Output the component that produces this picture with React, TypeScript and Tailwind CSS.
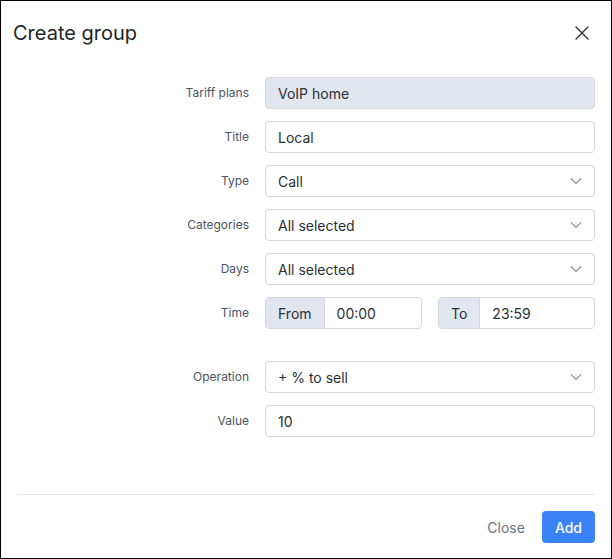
import { ChevronDown, X } from 'lucide-react';

const labelCls = 'w-[264px] pr-4 text-right text-[12px] text-[#4b5563]';
const inputCls = 'flex h-8 w-[330px] items-center rounded border border-[#d5d9de] px-3 text-[14px] text-[#2b3035]';

function Row({ label, children, className = '' }: { label: string; children: React.ReactNode; className?: string }) {
  return (
    <div className={`flex items-center ${className}`}>
      <div className={labelCls}>{label}</div>
      {children}
    </div>
  );
}

function Select({ value }: { value: string }) {
  return (
    <div className={`${inputCls} justify-between pr-2`}>
      <span>{value}</span>
      <ChevronDown size={20} strokeWidth={1.25} className="text-[#6b7280]" />
    </div>
  );
}

function TimeInput({ addon, value }: { addon: string; value: string }) {
  return (
    <div className="flex h-8 w-[157px] rounded border border-[#d5d9de] text-[14px] text-[#2b3035]">
      <div className="flex items-center rounded-l border-r border-[#d5d9de] bg-[#e1e6ef] px-3">{addon}</div>
      <div className="flex items-center px-3">{value}</div>
    </div>
  );
}

export default function App() {
  return (
    <div className="flex h-[559px] w-[612px] flex-col border border-black bg-white antialiased" style={{ fontFamily: 'Inter, "Noto Sans", sans-serif' }}>
      <div className="flex items-center justify-between pl-3 pr-[17px] pt-[17px]">
        <h2 className="text-[20px] font-normal text-[#212529]">Create group</h2>
        <X size={24} strokeWidth={1.4} className="text-[#333]" />
      </div>

      <div className="mt-[29px] flex flex-col gap-3">
        <Row label="Tariff plans">
          <div className={`${inputCls} bg-[#e1e6ef]`}>VoIP home</div>
        </Row>
        <Row label="Title">
          <div className={inputCls}>Local</div>
        </Row>
        <Row label="Type">
          <Select value="Call" />
        </Row>
        <Row label="Categories">
          <Select value="All selected" />
        </Row>
        <Row label="Days">
          <Select value="All selected" />
        </Row>
        <Row label="Time">
          <div className="flex w-[330px] gap-4">
            <TimeInput addon="From" value="00:00" />
            <TimeInput addon="To" value="23:59" />
          </div>
        </Row>
        <Row label="Operation" className="mt-5">
          <Select value="+ % to sell" />
        </Row>
        <Row label="Value">
          <div className={inputCls}>10</div>
        </Row>
      </div>

      <div className="mx-4 mt-[57px] border-t border-[#e5e7eb]" />

      <div className="flex items-center justify-end gap-[17px] pr-4 pt-4">
        <button className="px-0 text-[14px] text-[#6b7280]">Close</button>
        <button className="h-8 rounded bg-[#3b82f6] px-[13px] text-[14px] font-medium text-white">Add</button>
      </div>
    </div>
  );
}
